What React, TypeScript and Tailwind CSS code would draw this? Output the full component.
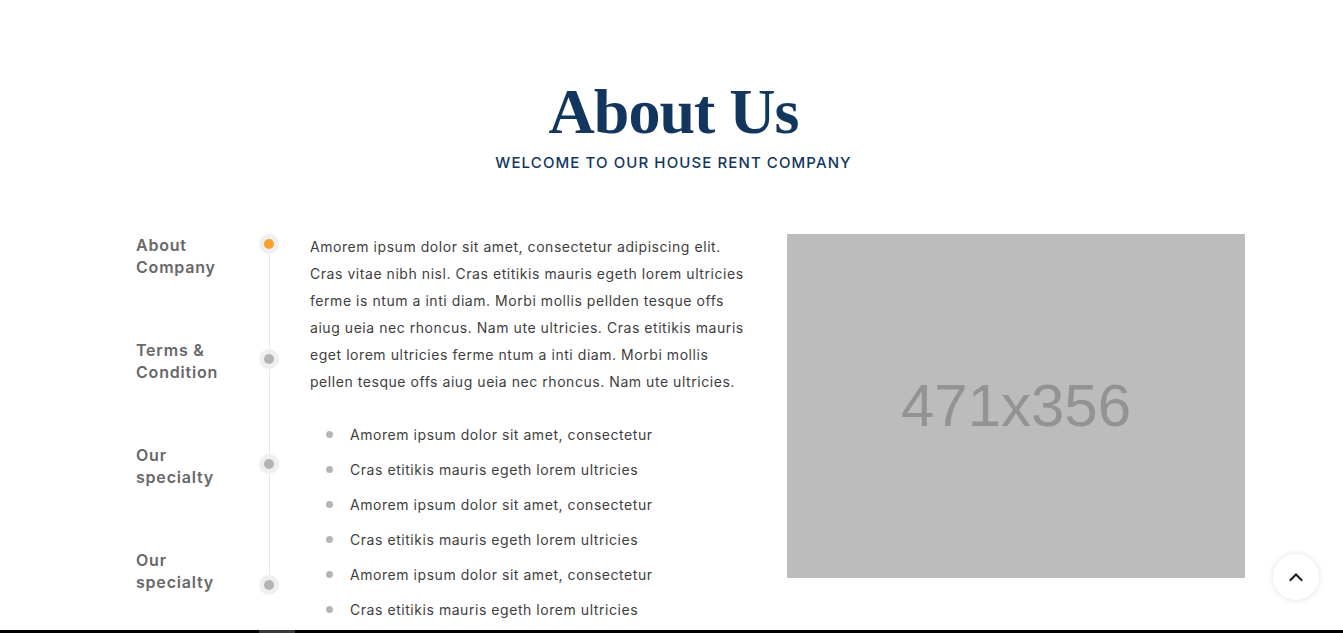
import React from "react";

const navItems = [
  { label: ["About", "Company"], dotTop: "mt-0", active: true },
  { label: ["Terms &", "Condition"], dotTop: "mt-[10px]", active: false },
  { label: ["Our", "specialty"], dotTop: "mt-[10px]", active: false },
  { label: ["Our", "specialty"], dotTop: "mt-[26px]", active: false },
];

const listItems = [
  "Amorem ipsum dolor sit amet, consectetur",
  "Cras etitikis mauris egeth lorem ultricies",
  "Amorem ipsum dolor sit amet, consectetur",
  "Cras etitikis mauris egeth lorem ultricies",
  "Amorem ipsum dolor sit amet, consectetur",
  "Cras etitikis mauris egeth lorem ultricies",
];

const paraLines = [
  "Amorem ipsum dolor sit amet, consectetur adipiscing elit.",
  "Cras vitae nibh nisl. Cras etitikis mauris egeth lorem ultricies",
  "ferme is ntum a inti diam. Morbi mollis pellden tesque offs",
  "aiug ueia nec rhoncus. Nam ute ultricies. Cras etitikis mauris",
  "eget lorem ultricies ferme ntum a inti diam. Morbi mollis",
  "pellen tesque offs aiug ueia nec rhoncus. Nam ute ultricies.",
];

export default function App() {
  return (
    <div className="relative min-h-[633px] w-full overflow-hidden bg-white font-['Inter',sans-serif]">
      <section className="pt-[74px]">
        <div className="flex flex-col items-center">
          <h1 className="ml-[4px] font-['Liberation_Serif',serif] text-[64px] font-bold leading-[76px] tracking-[-1px] text-[#12365d]">
            About Us
          </h1>
          <p className="ml-[4px] mt-[3px] mb-[1px] text-[15px] font-medium leading-[20px] tracking-[1.1px] text-[#12365d]">
            WELCOME TO OUR HOUSE RENT COMPANY
          </p>
        </div>

        <div className="mt-[60px] flex pl-[136px]">
          {/* Side nav */}
          <div className="relative w-[144px]">
            <div className="absolute left-[133px] top-[10px] h-[341px] w-px bg-[#e8e8e8]" />
            <div className="flex flex-col">
              {navItems.map((item, i) => (
                <div key={i} className="flex h-[105px]">
                  <div className="w-[123px] text-[16px] font-semibold leading-[22px] tracking-[0.8px] text-[#686868]">
                    {item.label[0]}
                    <br />
                    {item.label[1]}
                  </div>
                  <div className="w-[20px]">
                    <div
                      className={`relative flex h-[20px] w-[20px] items-center justify-center rounded-full bg-[#efefef] ${item.dotTop}`}
                    >
                      <div
                        className={`h-[10px] w-[10px] rounded-full ${
                          item.active ? "bg-[#f9a02f]" : "bg-[#b4b4b4]"
                        }`}
                      />
                    </div>
                  </div>
                </div>
              ))}
            </div>
          </div>

          {/* Text column */}
          <div className="-mt-[1px] ml-[30px] w-[442px] text-[14px] tracking-[0.55px] text-[#3e3e3e]">
            <p className="whitespace-nowrap leading-[27px]">
              {paraLines.map((l, i) => (
                <React.Fragment key={i}>
                  {l}
                  {i < paraLines.length - 1 && <br />}
                </React.Fragment>
              ))}
            </p>
            <ul className="mt-[26px] flex flex-col gap-[8px]">
              {listItems.map((t, i) => (
                <li key={i} className="flex items-center leading-[27px]">
                  <span className="ml-[16px] mr-[17px] h-[7px] w-[7px] rounded-full bg-[#b5b5b5]" />
                  {t}
                </li>
              ))}
            </ul>
          </div>

          {/* Image placeholder */}
          <div className="ml-[35px] flex h-[344px] w-[458px] items-center justify-center bg-[#bcbcbc]">
            <span className="font-['Liberation_Sans',sans-serif] text-[60px] leading-none text-[#939393]">
              471x356
            </span>
          </div>
        </div>
      </section>

      {/* Scroll to top */}
      <button className="fixed bottom-[33px] right-[24px] flex h-[46px] w-[46px] items-center justify-center rounded-full bg-white shadow-[0_0_6px_rgba(0,0,0,0.12)]">
        <svg width="16" height="16" viewBox="0 0 16 16" fill="none">
          <path d="M2.5 11L8 5.5L13.5 11" stroke="#1a1a1a" strokeWidth="2" strokeLinecap="square" />
        </svg>
      </button>

      {/* Bottom bar */}
      <div className="fixed bottom-0 left-0 h-[3px] w-full bg-black">
        <div className="ml-[259px] h-full w-[36px] bg-[#3a3a3a]" />
      </div>
    </div>
  );
}
